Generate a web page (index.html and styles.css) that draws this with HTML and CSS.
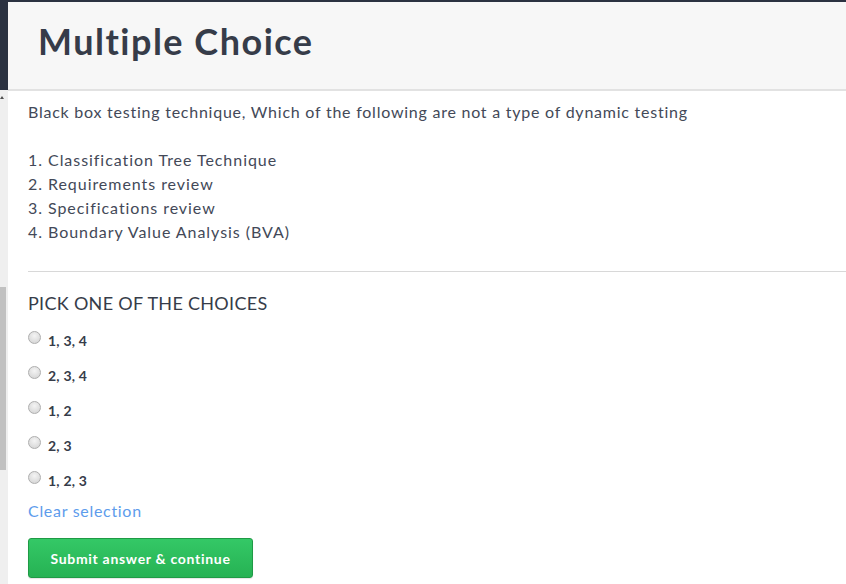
FILE: index.html
```html
<!DOCTYPE html>
<html>
<head>
<meta charset="utf-8">
<link rel="stylesheet" href="styles.css">
</head>
<body>
<div class="page">
  <div class="rail">
    <div class="rail-top"></div>
    <div class="rail-track">
      <div class="rail-arrow"></div>
      <div class="rail-thumb"></div>
    </div>
  </div>
  <div class="main">
    <header class="header">
      <h1 class="title">Multiple Choice</h1>
    </header>
    <section class="content">
      <div class="question">
        <p>Black box testing technique, Which of the following are not a type of dynamic testing</p>
        <p class="blank">&nbsp;</p>
        <p class="item">1. Classification Tree Technique</p>
        <p class="item">2. Requirements review</p>
        <p class="item">3. Specifications review</p>
        <p class="item">4. Boundary Value Analysis (BVA)</p>
      </div>
      <hr class="divider">
      <h2 class="pick">PICK ONE OF THE CHOICES</h2>
      <ul class="choices">
        <li class="choice"><input type="radio" name="c" class="radio"><span>1, 3, 4</span></li>
        <li class="choice"><input type="radio" name="c" class="radio"><span>2, 3, 4</span></li>
        <li class="choice"><input type="radio" name="c" class="radio"><span>1, 2</span></li>
        <li class="choice"><input type="radio" name="c" class="radio"><span>2, 3</span></li>
        <li class="choice"><input type="radio" name="c" class="radio"><span>1, 2, 3</span></li>
      </ul>
      <a class="clear" href="#">Clear selection</a>
      <button class="submit" type="button">Submit answer &amp; continue</button>
    </section>
  </div>
</div>
</body>
</html>
```
FILE: styles.css
```css
html, body {
  margin: 0;
  padding: 0;
  background: #ffffff;
  height: 584px;
  overflow: hidden;
}
.page {
  display: flex;
  height: 584px;
  border-top: 2px solid #2b3241;
  box-sizing: border-box;
  font-family: Lato, "Open Sans", sans-serif;
  color: #414756;
}
.rail {
  width: 8px;
  flex: none;
  display: flex;
  flex-direction: column;
}
.rail-top {
  height: 88px;
  background: #2b3241;
}
.rail-track {
  flex: 1;
  background: #efefef;
  display: flex;
  flex-direction: column;
  padding-top: 6px;
}
.rail-arrow {
  width: 0;
  height: 0;
  border-left: 2px solid transparent;
  border-right: 2px solid transparent;
  border-bottom: 3px solid #505050;
  margin-left: 0;
}
.rail-thumb {
  margin-top: 188px;
  width: 6px;
  height: 183px;
  background: #c1c1c1;
}
.main {
  flex: 1;
  min-width: 0;
}
.header {
  background: #f7f7f7;
  border-bottom: 2px solid #e2e2e2;
  height: 89px;
  box-sizing: border-box;
  padding-left: 30px;
  padding-top: 17px;
}
.title {
  margin: 0;
  font-family: Lato, sans-serif;
  font-weight: 700;
  font-size: 36px;
  line-height: 44px;
  color: #363c49;
  letter-spacing: 1.5px;
}
.content {
  padding: 9px 0 0 20px;
}
.question p {
  margin: 0;
  font-size: 16px;
  line-height: 24px;
  color: #434958;
  letter-spacing: 0.76px;
}
.question .item {
  letter-spacing: 0.95px;
}
.question .blank {
  height: 24px;
}
.divider {
  border: 0;
  border-top: 1px solid #d8d8d8;
  margin: 27px 0 0 0;
}
.pick {
  margin: 20px 0 0 0;
  font-size: 18px;
  line-height: 22px;
  font-weight: 400;
  color: #363c49;
  letter-spacing: 0.3px;
}
.choices {
  list-style: none;
  margin: 16px 0 0 0;
  padding: 0;
  display: flex;
  flex-direction: column;
  gap: 13px;
}
.choice {
  display: flex;
  align-items: flex-start;
  height: 22px;
  font-size: 14px;
  font-weight: 700;
  line-height: 22px;
  color: #363c49;
}
.choice span {
  padding-top: 2px;
  line-height: 18px;
  letter-spacing: 0.2px;
}
.radio {
  appearance: none;
  -webkit-appearance: none;
  width: 13px;
  height: 13px;
  margin: 1px 7px 0 0;
  border-radius: 50%;
  border: 1px solid #aeaeae;
  background: radial-gradient(circle at 50% 35%, #f4f4f4 0%, #d6d6d6 85%);
  box-sizing: border-box;
  flex: none;
}
.clear {
  display: block;
  margin-top: 8px;
  font-size: 16px;
  line-height: 22px;
  color: #5d9cec;
  text-decoration: none;
  letter-spacing: 0.7px;
}
.submit {
  display: block;
  margin-top: 16px;
  width: 225px;
  height: 40px;
  border: 1px solid #1f9a45;
  border-radius: 3px;
  background: linear-gradient(#34c866, #26b253);
  color: #ffffff;
  font-family: Lato, sans-serif;
  font-weight: 700;
  font-size: 14px;
  letter-spacing: 0.7px;
  padding: 0;
  box-shadow: 0 1px 1px rgba(0,0,0,0.1);
}
```
